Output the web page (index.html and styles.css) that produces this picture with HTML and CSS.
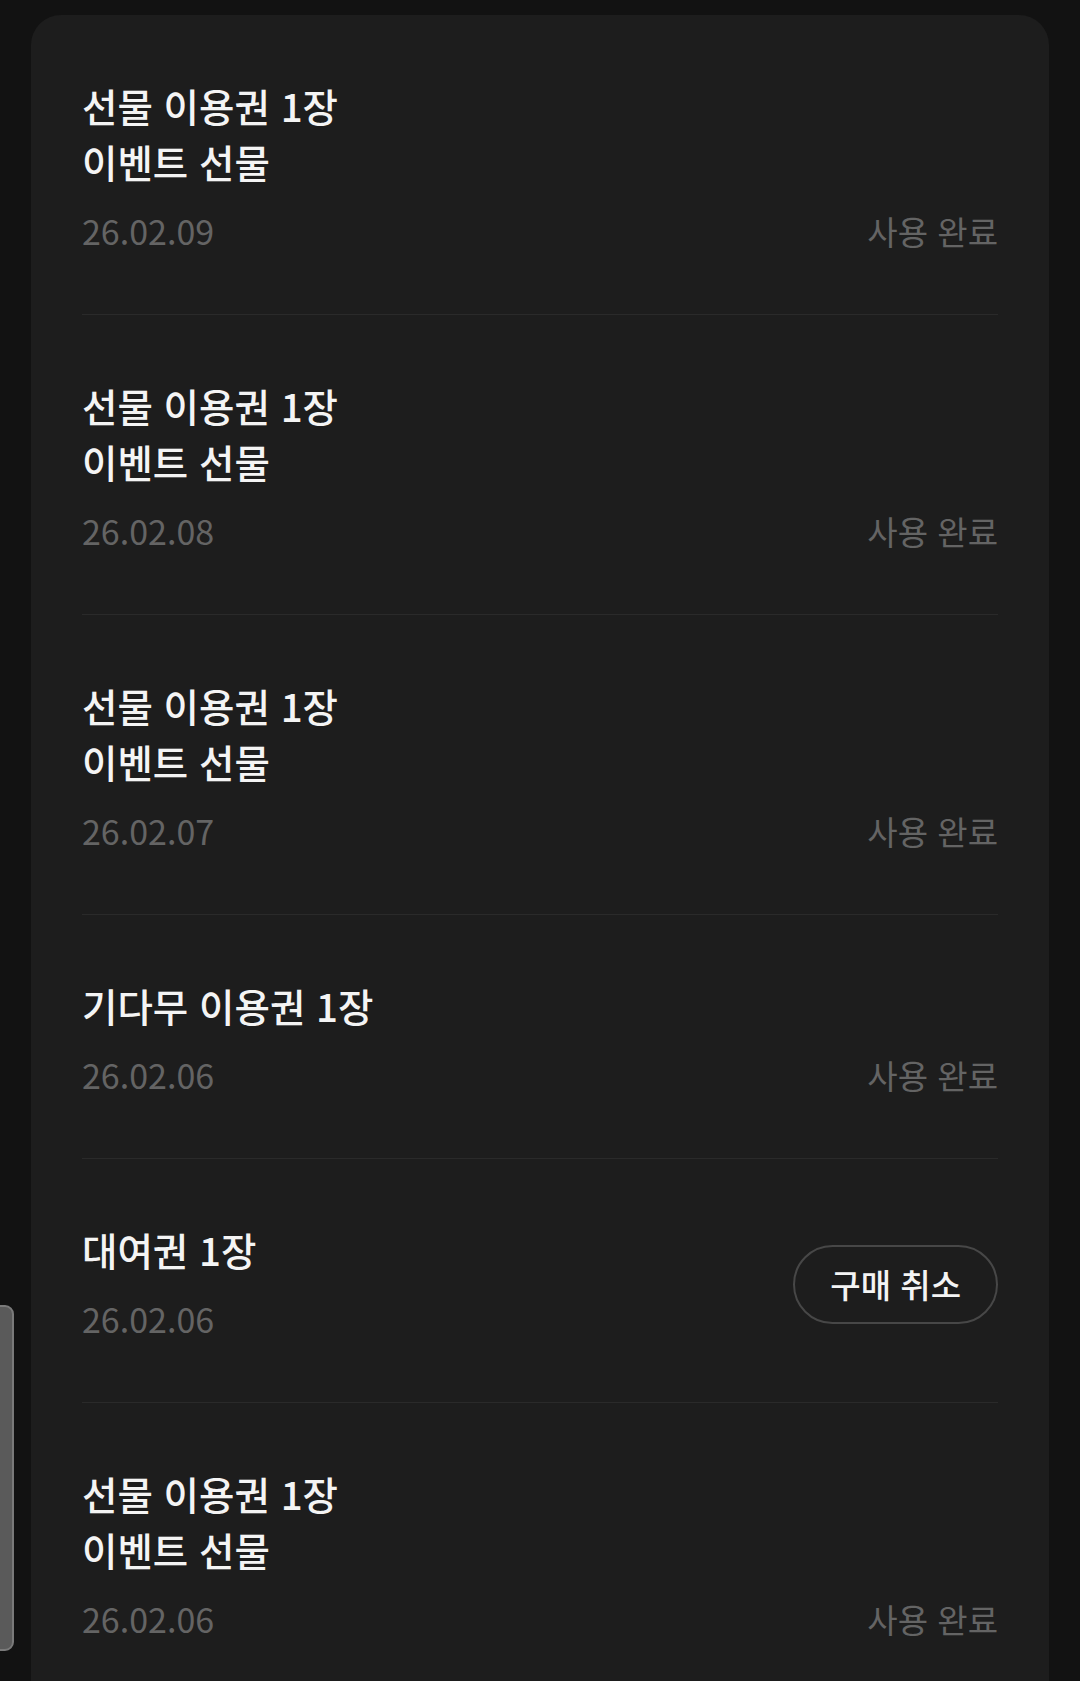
FILE: index.html
```html
<!DOCTYPE html>
<html lang="ko">
<head>
  <meta charset="UTF-8" />
  <title>이용권 내역</title>
  <meta name="viewport" content="width=device-width, initial-scale=1.0" />
  <link rel="stylesheet" href="styles.css">
</head>
<body>
  <div class="scroll-thumb"></div>

  <div class="history-card">
    <ul class="history-list">
      <li class="history-item">
        <div class="item-info">
          <div class="item-title">선물 이용권 1장<br>이벤트 선물</div>
          <div class="item-date">26.02.09</div>
        </div>
        <span class="item-status">사용 완료</span>
      </li>
      <li class="history-item">
        <div class="item-info">
          <div class="item-title">선물 이용권 1장<br>이벤트 선물</div>
          <div class="item-date">26.02.08</div>
        </div>
        <span class="item-status">사용 완료</span>
      </li>
      <li class="history-item">
        <div class="item-info">
          <div class="item-title">선물 이용권 1장<br>이벤트 선물</div>
          <div class="item-date">26.02.07</div>
        </div>
        <span class="item-status">사용 완료</span>
      </li>
      <li class="history-item">
        <div class="item-info">
          <div class="item-title">기다무 이용권 1장</div>
          <div class="item-date">26.02.06</div>
        </div>
        <span class="item-status">사용 완료</span>
      </li>
      <li class="history-item center">
        <div class="item-info">
          <div class="item-title">대여권 1장</div>
          <div class="item-date">26.02.06</div>
        </div>
        <button class="cancel-btn" type="button">구매 취소</button>
      </li>
      <li class="history-item">
        <div class="item-info">
          <div class="item-title">선물 이용권 1장<br>이벤트 선물</div>
          <div class="item-date">26.02.06</div>
        </div>
        <span class="item-status">사용 완료</span>
      </li>
    </ul>
  </div>
</body>
</html>
```

FILE: styles.css
```css
:root {
  --bg: #121212;
  --card: #1d1d1d;
  --text: #f4f4f4;
  --muted: #646464;
  --line: #2a2a2a;
  --btn-border: #474747;
}

body {
  font-family: "Noto Sans CJK KR", "Noto Sans", sans-serif;
  background-color: var(--bg);
  color: var(--text);
  margin: 0;
  padding: 15px 31px 0;
  height: 1666px;
  overflow: hidden;
}

.history-card {
  background: var(--card);
  border-radius: 30px 30px 0 0;
  padding: 0 51px;
  min-height: 1700px;
}

.history-list {
  list-style: none;
  margin: 0;
  padding: 0;
}

.history-item {
  display: flex;
  justify-content: space-between;
  align-items: flex-end;
  padding: 62px 0 55px;
  border-bottom: 1px solid var(--line);
}

.history-item.center {
  align-items: center;
}

.item-title {
  font-size: 38.5px;
  line-height: 56px;
  font-weight: 500;
}

.item-date {
  margin-top: 14px;
  font-size: 34px;
  line-height: 56px;
  color: var(--muted);
}

.item-status {
  font-size: 33px;
  line-height: 56px;
  color: var(--muted);
}

.cancel-btn {
  font-family: inherit;
  font-size: 33px;
  font-weight: 500;
  color: var(--text);
  background: transparent;
  border: 2px solid var(--btn-border);
  border-radius: 40px;
  height: 79px;
  padding: 0 35px;
}

.scroll-thumb {
  position: fixed;
  left: -10px;
  top: 1305px;
  width: 20px;
  height: 342px;
  background: #5a5a5a;
  border: 2px solid #7a7a7a;
  border-radius: 9px;
}
```
